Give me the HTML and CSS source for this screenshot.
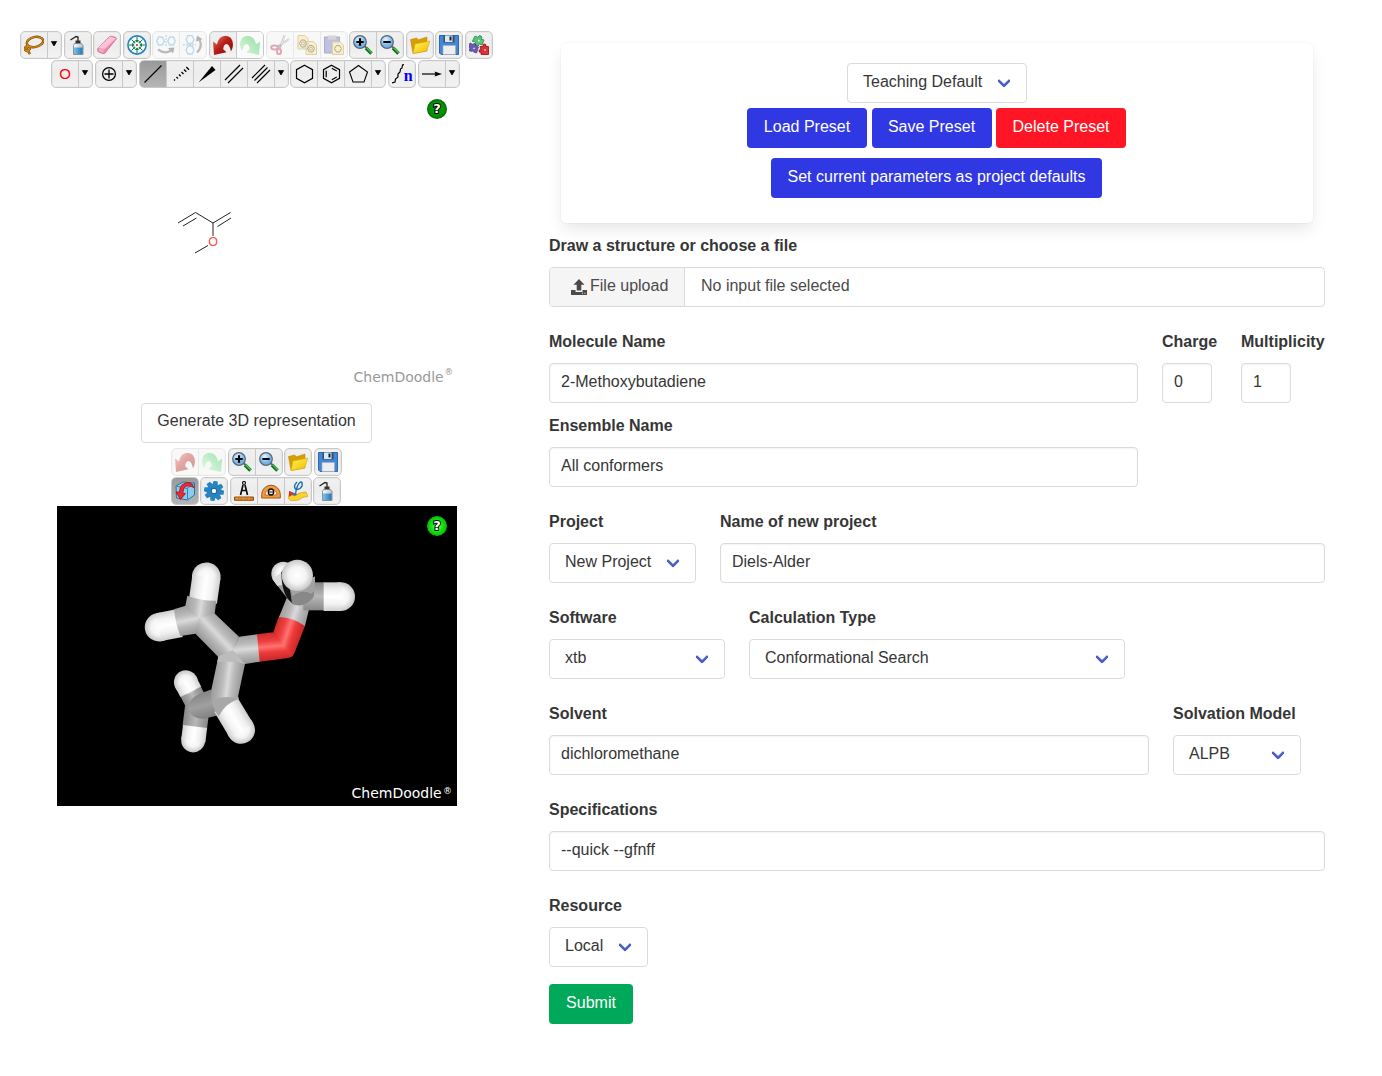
FILE: index.html
```html
<!DOCTYPE html>
<html lang="en">
<head>
<meta charset="utf-8">
<title>Launch calculation</title>
<link rel="stylesheet" href="styles.css">
</head>
<body>
<svg class="defs" width="0" height="0">
  <defs>
    <linearGradient id="red" x1="0" y1="0" x2="1" y2="1"><stop offset="0" stop-color="#ed8175"/><stop offset=".45" stop-color="#b92018"/><stop offset="1" stop-color="#7d0a08"/></linearGradient>
    <linearGradient id="green" x1="1" y1="0" x2="0" y2="1"><stop offset="0" stop-color="#21b94a"/><stop offset="1" stop-color="#b2f5ae"/></linearGradient>
    <linearGradient id="yellow" x1="0" y1="0" x2="1" y2="1"><stop offset="0" stop-color="#fff45a"/><stop offset="1" stop-color="#f2b900"/></linearGradient>
    <linearGradient id="metal"><stop offset="0" stop-color="#f8fbff"/><stop offset="1" stop-color="#b7c3cc"/></linearGradient>
    <linearGradient id="liquid"><stop offset="0" stop-color="#7bc3ee"/><stop offset="1" stop-color="#2477b5"/></linearGradient>
    <radialGradient id="lens" cx=".4" cy=".3"><stop offset="0" stop-color="#e6f6ff"/><stop offset="1" stop-color="#72b5e8"/></radialGradient>
    <radialGradient id="helpDark"><stop offset="0" stop-color="#079a07"/><stop offset=".75" stop-color="#059005"/><stop offset="1" stop-color="#035f03"/></radialGradient>
    <radialGradient id="helpLight"><stop offset="0" stop-color="#9bff9b"/><stop offset=".45" stop-color="#20ed20"/><stop offset="1" stop-color="#00bd00"/></radialGradient>
  </defs>
  <symbol id="i-lasso" viewBox="0 0 20 20"><g fill="none" stroke="#704000" stroke-width="2.4"><ellipse cx="11" cy="7" rx="8.300" ry="5" transform="rotate(-12 11 7)"/><path d="M4 10.500q-4 1.500-3 4.500 2 2 4 0t0-3.500q-4 1-1 4.500l2 3"/></g><g fill="none" stroke="#d58b18" stroke-width="1.200"><ellipse cx="11" cy="7" rx="8.300" ry="5" transform="rotate(-12 11 7)"/><path d="M4 10.500q-4 1.500-3 4.500 2 2 4 0t0-3.500q-4 1-1 4.500l2 3"/></g></symbol>
  <symbol id="i-bottle" viewBox="0 0 20 20"><path d="M2.500 5 8 1.500l2 .5v5" fill="none" stroke="#222" stroke-width="1.300"/><path d="M7.500 5.500h5v3h-5z" fill="#333"/><path d="M6.500 8.500h7l1.500 2v9H5.500v-9z" fill="url(#metal)" stroke="#777" stroke-width=".8"/><path d="M6 12.500h8.500V19H6z" fill="url(#liquid)"/></symbol>
  <symbol id="i-eraser" viewBox="0 0 20 20"><path d="m1 13 11-11q1-1 2.500-.7l4 1q1.500.7.500 2L8 18q-1 1-2.500.5L1.500 17Q0 16 1 13z" fill="#ef8aab" stroke="#b95478" stroke-width=".6"/><path d="m1 13 12-11.500 6 1.700L7.500 14.300z" fill="#ffc2d4"/><path d="m2 13.200 5 1.200-.7 3.500-4.500-1.400z" fill="#f7a7c0"/></symbol>
  <symbol id="i-center" viewBox="0 0 20 20"><circle cx="10" cy="10" r="9.100" fill="#f2fbff" stroke="#2783b8" stroke-width="1.600"/><path d="M10 2v5M10 18v-5M2 10h5M18 10h-5M4.500 4.500 8 8M15.500 4.500 12 8M4.500 15.500 8 12M15.500 15.500 12 12" stroke="#137c46" stroke-width="1"/><path d="m8 5 2 2.500L12 5zM8 15l2-2.500 2 2.500zM5 8l2.500 2L5 12zM15 8l-2.500 2 2.500 2zM5.500 8.200h2.700V5.500zM14.500 8.200h-2.700V5.500zM5.500 11.800h2.700v2.700zM14.500 11.800h-2.700v2.700z" fill="#128044"/><circle cx="10" cy="10" r="1.100" fill="#e24"/></symbol>
  <symbol id="i-fliph" viewBox="0 0 20 20"><path d="m.7 6 2-4h3.500l2 4-2 4H2.700zM11.800 6l2-4h3.500l2 4-2 4h-3.500z" fill="none" stroke="#4aa2d7" stroke-width="1.300"/><path d="M10 0v12" stroke="#777" stroke-dasharray="2 1"/><path d="M2 14.500q7 5 13 1" fill="none" stroke="#555" stroke-width="2.200"/><path d="m12 13 6.500-.5-1.500 6z" fill="#444"/></symbol>
  <symbol id="i-flipv" viewBox="0 0 20 20"><path d="m3 4.500 2-4h4l2 4-2 4H5zM3 15l2-4h4l2 4-2 4H5z" fill="none" stroke="#4aa2d7" stroke-width="1.300"/><path d="M0 9.800h13" stroke="#777" stroke-dasharray="2 1"/><path d="M14 17.500q6-6 2.500-12.500" fill="none" stroke="#555" stroke-width="2.200"/><path d="m13 6.500 1-6 5.500 3.800z" fill="#444"/></symbol>
  <symbol id="i-undo" viewBox="0 0 20 20"><path d="M0 6.500 1 20l12.500-2.700-3.300-3q.3-5 3.300-5.300 3 0 4.500 7.500Q20 13 20 9.500 19.500 1 12.500.7 5.500 1 4 9.500z" fill="url(#red)"/></symbol>
  <symbol id="i-redo" viewBox="0 0 20 20"><path d="m20 6.500-1 13.500-12.500-2.700 3.300-3Q9.500 9.300 6.500 9 3.500 9 2 16.500 0 13 0 9.500.5 1 7.500.7q7 .3 8.500 8.800z" fill="url(#green)"/></symbol>
  <symbol id="i-cut" viewBox="0 0 20 20"><path d="M19 4 7 12M14.500.5 9.500 14" stroke="#666" stroke-width="2"/><path d="m19 4-8 5M14.500 1l-3 8" stroke="#ccc"/><g fill="none" stroke="#b22b3c" stroke-width="2"><ellipse cx="4.500" cy="12.500" rx="3.300" ry="2"/><ellipse cx="9" cy="16.500" rx="2" ry="2.800"/></g></symbol>
  <symbol id="i-copy" viewBox="0 0 20 20"><path d="M1 .5h7l3 3v10.500H1zM9 6.500h7l3.500 3v10H9z" fill="#f3d56b" stroke="#a98a34"/><path d="m2.500 8.500 2-3.500h3l2 3.500-2 3.500h-3zM10.500 13.500l2-3h3l2 3-2 3.500h-3z" fill="none" stroke="#222"/><circle cx="6" cy="8.500" r="1.500" fill="none" stroke="#222" stroke-width=".6"/><circle cx="14" cy="13.700" r="1.500" fill="none" stroke="#222" stroke-width=".6"/></symbol>
  <symbol id="i-paste" viewBox="0 0 20 20"><path d="M.5 2h15v16H.5z" fill="#6464b8" stroke="#336"/><path d="M4 .5h8v4H4z" fill="#999"/><path d="M8.500 7h7.500l3.500 3v9.500h-11z" fill="#f3d56b" stroke="#a98a34"/><path d="m10.500 13.500 2-3h3l2 3-2 3.500h-3z" fill="none" stroke="#222"/></symbol>
  <symbol id="i-zoomin" viewBox="0 0 20 20"><path d="m13 13 5.500 5.500" stroke="#176b20" stroke-width="3.500"/><path d="m13.500 12.500 5.500 5.500" stroke="#44c552" stroke-width="1.500"/><path d="m11.500 11 2 2" stroke="#666" stroke-width="2"/><circle cx="7" cy="7" r="6.300" fill="url(#lens)" stroke="#596572" stroke-width="1.200"/><path d="M3.300 7h7.400M7 3.300v7.400" stroke="#000" stroke-width="2.200"/></symbol>
  <symbol id="i-zoomout" viewBox="0 0 20 20"><path d="m13 13 5.500 5.500" stroke="#176b20" stroke-width="3.500"/><path d="m13.500 12.500 5.500 5.500" stroke="#44c552" stroke-width="1.500"/><path d="m11.500 11 2 2" stroke="#666" stroke-width="2"/><circle cx="7" cy="7" r="6.300" fill="url(#lens)" stroke="#596572" stroke-width="1.200"/><path d="M3.300 7h7.400" stroke="#000" stroke-width="2.200"/></symbol>
  <symbol id="i-open" viewBox="0 0 20 20"><path d="m.5 4.500 6-1.500 2 1.700 8.500-2.700v14L3 18.500z" fill="#d89d00" stroke="#b88000" stroke-width=".5"/><path d="m5 9 15-3-3.500 10L3 18.500z" fill="url(#yellow)" stroke="#d9a600" stroke-width=".5"/></symbol>
  <symbol id="i-save" viewBox="0 0 20 20"><path d="M.5.500h19v19H2L.5 18z" fill="#4388d6" stroke="#2b68ae"/><path d="M4.500.500h11v7h-11z" fill="#344c70"/><path d="M6 .500h7.500v6.500H6z" fill="#dce9ef"/><path d="M10.500 1.500h2v4h-2z" fill="#123"/><path d="M4 10.500h12.500v9H4z" fill="#eee" stroke="#aab" stroke-width=".7"/></symbol>
  <symbol id="i-parts" viewBox="0 0 20 20"><path d="m6 1 3 1.500q1-3 3-1.500t0 3l3 1-2 5-2.500-1q-2 0-1 2l-4-1 1-3q-2-2-2.500 0l-.5-1z" fill="#5bc576" stroke="#15794b" stroke-width=".7"/><path d="m1 8 3 1.500q1-2 2.500-.5t0 2l3 1-2 6-3-1q-.5-2-2-.5L0 15.500l1-2.500q-2-1-1-2z" fill="#6c5bb3" stroke="#483786" stroke-width=".7"/><path d="M11 11.500h3q-.5-3 1.500-2.500 2 0 1.500 2.500h2.500v8h-7.500V17q-2 1-2-1t2-1z" fill="#dc3035" stroke="#8e1218" stroke-width=".8"/><path d="m9 5.300 1.500.7M4.500 13l1 .7M15.300 15h1.400" stroke="#fff" stroke-width="1.400"/></symbol>
  <symbol id="i-charge" viewBox="0 0 20 20"><circle cx="10" cy="10" r="6.400" fill="none" stroke="#000" stroke-width="1.300"/><path d="M5.500 10h9M10 5.500v9" stroke="#000" stroke-width="1.300"/></symbol>
  <symbol id="i-single" viewBox="0 0 20 20"><path d="M1.500 18.500 18.500 1.500" stroke="#000" stroke-width="1.100"/></symbol>
  <symbol id="i-dashed" viewBox="0 0 20 20"><path d="m4 15.500 1 1M6.500 13l1.500 1.500M9 10.500l1.700 1.700M11.500 8l2 2M14 5.500l2.300 2.300M16.300 3l2.700 2.700" stroke="#000" stroke-width="1.300"/></symbol>
  <symbol id="i-wedge" viewBox="0 0 20 20"><path d="M1.500 18.500 15 2l3.500 4z"/></symbol>
  <symbol id="i-double" viewBox="0 0 20 20"><path d="M1 16 16 1M4 19 19 4" stroke="#000" stroke-width="1.200"/></symbol>
  <symbol id="i-triple" viewBox="0 0 20 20"><path d="M1 14 14 1M3.500 16.500 16.500 3.500M6 19 19 6" stroke="#000" stroke-width="1.200"/></symbol>
  <symbol id="i-hexagon" viewBox="0 0 20 20"><path d="m10.500 1.200 8 4.400v8.800l-8 4.400-8-4.400V5.600z" fill="none" stroke="#000" stroke-width="1.200"/></symbol>
  <symbol id="i-benzene" viewBox="0 0 20 20"><path d="m10.500 1.200 8 4.400v8.800l-8 4.400-8-4.400V5.600zM5.200 6.700v6.600M10.800 4.300l5 2.700M10.800 15.700l5-2.700" fill="none" stroke="#000" stroke-width="1.200"/></symbol>
  <symbol id="i-pentagon" viewBox="0 0 20 20"><path d="m10.500 1.500 9 6.500-3.500 10h-11L1.500 8z" fill="none" stroke="#000" stroke-width="1.100"/></symbol>
  <symbol id="i-arrow" viewBox="0 0 20 20"><path d="M0 10h16" stroke="#333" stroke-width="1.400"/><path d="m12.500 7.500 7.500 2.500-7.500 2.500 1-2.500z"/></symbol>
  <symbol id="i-rotate" viewBox="0 0 20 20"><path d="m1 5 7-4 11.500 1v12l-7 5L1.500 17z" fill="#8dcbed" stroke="#2378a5"/><path d="m1 5 11 2.500 7-5M12.500 7.500v11" fill="none" stroke="#3187b4"/><path d="M19 6.500Q16-1.500 7.500 3.500 4.500 6 4.500 11H1l4.500 7.500 5-6H7.800Q8 1 19 6.500z" fill="#f12a32" stroke="#a30e16" stroke-width=".8"/></symbol>
  <symbol id="i-gear" viewBox="0 0 20 20"><g fill="#2684c3"><circle cx="10" cy="10" r="7"/><path d="M8 0h4l1 5H7zM8 20h4l1-5H7zM0 8v4l5 1V7zM20 8v4l-5 1V7z" transform="rotate(10 10 10)"/><path d="M8 0h4l1 5H7zM8 20h4l1-5H7zM0 8v4l5 1V7zM20 8v4l-5 1V7z" transform="rotate(55 10 10)"/></g><circle cx="10" cy="10" r="2.800" fill="#f3f8fc" stroke="#155a8b"/></symbol>
  <symbol id="i-distance" viewBox="0 0 20 20"><circle cx="10" cy="2" r="1.500" fill="none" stroke="#111" stroke-width="1.200"/><path d="M9 4 6.500 14M11 4l2.500 10M7.500 9.500h5" fill="none" stroke="#111" stroke-width="1.700"/><path d="M.5 16h19v3.300H.5z" fill="#d98029" stroke="#96500f"/><path d="M3 16.500v2M6 16.500v1M9 16.500v2M12 16.500v1M15 16.500v2" stroke="#f4bd73" stroke-width=".7"/></symbol>
  <symbol id="i-angle" viewBox="0 0 20 20"><path d="M.7 17v-3.500a9.300 9.300 0 0 1 18.600 0V17z" fill="#ed9c45" stroke="#a8560b"/><path d="M4 14a6 6 0 0 1 12 0z" fill="#fff3df" stroke="#a8560b" stroke-width=".7"/><ellipse cx="10" cy="11" rx="2.700" ry="3" fill="none" stroke="#111" stroke-width="1.300"/><path d="M7.500 11h5" stroke="#111"/></symbol>
  <symbol id="i-torsion" viewBox="0 0 20 20"><path d="m1 10 8 3 9-2v4l-9 4-8-2z" fill="#2c78c5"/><path d="m1 13 6 2q4-4 11-4l2 4.500q-6 0-9 3.500l-8 1-3-3z" fill="#ffd02b" stroke="#c68c00" stroke-width=".5"/><path d="m1 10 5 2.500-5 3.500z" fill="#dd3028"/><path d="M9 1Q5 5 7.500 8q4 1.500 6.500-3 .7-4.500-1.500-4-3.500 2-5 12" fill="none" stroke="#176fae" stroke-width="1.400"/></symbol>
  <symbol id="i-down" viewBox="0 0 8 8"><path d="M1.300 1.500h5.400L4 6z" stroke="#000" stroke-width=".7" stroke-linejoin="round"/></symbol>
</svg>

<main class="page">
  <section class="sketcher">
    <div class="toolbar wide">
      <div class="group"><span class="tool"><svg><use href="#i-lasso"/></svg></span><span class="drop"><svg><use href="#i-down"/></svg></span></div>
      <div class="group"><span class="tool"><svg><use href="#i-bottle"/></svg></span></div>
      <div class="group"><span class="tool"><svg><use href="#i-eraser"/></svg></span></div>
      <div class="group"><span class="tool"><svg><use href="#i-center"/></svg></span></div>
      <div class="group off"><span class="tool"><svg><use href="#i-fliph"/></svg></span><span class="tool"><svg><use href="#i-flipv"/></svg></span></div>
      <div class="group"><span class="tool"><svg><use href="#i-undo"/></svg></span><span class="tool off-tool"><svg><use href="#i-redo"/></svg></span></div>
      <div class="group off"><span class="tool"><svg><use href="#i-cut"/></svg></span><span class="tool"><svg><use href="#i-copy"/></svg></span><span class="tool"><svg><use href="#i-paste"/></svg></span></div>
      <div class="group"><span class="tool"><svg><use href="#i-zoomin"/></svg></span><span class="tool"><svg><use href="#i-zoomout"/></svg></span></div>
      <div class="group"><span class="tool"><svg><use href="#i-open"/></svg></span></div>
      <div class="group"><span class="tool"><svg><use href="#i-save"/></svg></span></div>
      <div class="group"><span class="tool"><svg><use href="#i-parts"/></svg></span></div>
    </div>
    <div class="toolbar bonds">
      <div class="group"><span class="tool element">O</span><span class="drop"><svg><use href="#i-down"/></svg></span></div>
      <div class="group"><span class="tool"><svg><use href="#i-charge"/></svg></span><span class="drop"><svg><use href="#i-down"/></svg></span></div>
      <div class="group"><span class="tool active"><svg><use href="#i-single"/></svg></span><span class="tool"><svg><use href="#i-dashed"/></svg></span><span class="tool"><svg><use href="#i-wedge"/></svg></span><span class="tool"><svg><use href="#i-double"/></svg></span><span class="tool"><svg><use href="#i-triple"/></svg></span><span class="drop"><svg><use href="#i-down"/></svg></span></div>
      <div class="group"><span class="tool"><svg><use href="#i-hexagon"/></svg></span><span class="tool"><svg><use href="#i-benzene"/></svg></span><span class="tool"><svg><use href="#i-pentagon"/></svg></span><span class="drop"><svg><use href="#i-down"/></svg></span></div>
      <div class="group"><span class="tool chain"><svg viewBox="0 0 12 20"><path d="m0 19 3-1 .5-3 2.500-2 0-3 2-2 .500-3L10 4l.500-3L12 .500" fill="none" stroke="#000" stroke-width="1.200"/></svg><b>n</b></span></div>
      <div class="group"><span class="tool"><svg><use href="#i-arrow"/></svg></span><span class="drop"><svg><use href="#i-down"/></svg></span></div>
    </div>
    <svg class="canvas flat" viewBox="0 0 400 300">
      <path d="M121 135 138.500 124.500 156 135 173.500 124.500M126 138l13.500-8M160.500 138.500l13.500-8.500M156 135V148M138 165l13-7.500" fill="none" stroke="#222"/>
      <text x="156" y="158" class="oxygen">O</text>
      <circle cx="380" cy="21" r="10" fill="url(#helpDark)"/>
      <text x="380" y="25" class="help">?</text>
      <text x="296.500" y="294" class="brand">ChemDoodle</text><text x="387.300" y="287" class="brand reg">®</text>
    </svg>
    <button class="button outline">Generate 3D representation</button>
    <div class="toolbar view">
      <div class="group off"><span class="tool"><svg><use href="#i-undo"/></svg></span><span class="tool"><svg><use href="#i-redo"/></svg></span></div>
      <div class="group"><span class="tool"><svg><use href="#i-zoomin"/></svg></span><span class="tool"><svg><use href="#i-zoomout"/></svg></span></div>
      <div class="group"><span class="tool"><svg><use href="#i-open"/></svg></span></div>
      <div class="group"><span class="tool"><svg><use href="#i-save"/></svg></span></div>
    </div>
    <div class="toolbar view measure">
      <div class="group"><span class="tool active"><svg><use href="#i-rotate"/></svg></span></div>
      <div class="group"><span class="tool"><svg><use href="#i-gear"/></svg></span></div>
      <div class="group"><span class="tool"><svg><use href="#i-distance"/></svg></span><span class="tool"><svg><use href="#i-angle"/></svg></span><span class="tool"><svg><use href="#i-torsion"/></svg></span></div>
      <div class="group"><span class="tool"><svg><use href="#i-bottle"/></svg></span></div>
    </div>
    <svg class="canvas solid" viewBox="0 0 400 300">
      <defs>
        <linearGradient id="c" x2="0" y2="1"><stop offset="0" stop-color="#a0a0a0"/><stop offset=".3" stop-color="#bababa"/><stop offset=".5" stop-color="#dadada"/><stop offset=".7" stop-color="#bababa"/><stop offset="1" stop-color="#9a9a9a"/></linearGradient>
        <linearGradient id="cd" x2="0" y2="1"><stop offset="0" stop-color="#888"/><stop offset=".5" stop-color="#b8b8b8"/><stop offset="1" stop-color="#888"/></linearGradient>
        <linearGradient id="cc" href="#c" gradientUnits="userSpaceOnUse" x1="290" y1="237" x2="228" y2="295"/>
        <linearGradient id="cu" href="#c" gradientUnits="userSpaceOnUse" x1="171" y1="168" x2="257" y2="180"/>
        <linearGradient id="cl" href="#c" gradientUnits="userSpaceOnUse" x1="150" y1="188" x2="167" y2="270"/>
        <linearGradient id="co" href="#c" gradientUnits="userSpaceOnUse" x1="350" y1="271" x2="358" y2="353"/>
        <linearGradient id="c3" href="#c" gradientUnits="userSpaceOnUse" x1="255" y1="392" x2="335" y2="402"/>
        <linearGradient id="cm" href="#c" gradientUnits="userSpaceOnUse" x1="457" y1="190" x2="534" y2="215"/>
        <linearGradient id="c4" gradientUnits="userSpaceOnUse" x1="205" y1="445" x2="225" y2="522"><stop offset="0" stop-color="#858585"/><stop offset=".5" stop-color="#a0a0a0"/><stop offset="1" stop-color="#808080"/></linearGradient>
        <linearGradient id="o"><stop offset="0" stop-color="#cf2a2a"/><stop offset=".3" stop-color="#f04040"/><stop offset=".5" stop-color="#ff7272"/><stop offset=".7" stop-color="#ee3a3a"/><stop offset="1" stop-color="#c82828"/></linearGradient>
        <linearGradient id="oh" href="#o" gradientUnits="userSpaceOnUse" x1="405" y1="265" x2="413" y2="347"/>
        <linearGradient id="ov" href="#o" gradientUnits="userSpaceOnUse" x1="436" y1="240" x2="515" y2="267"/>
        <linearGradient id="h" x2="0" y2="1"><stop offset="0" stop-color="#cfcfcf"/><stop offset=".25" stop-color="#f0f0f0"/><stop offset=".5" stop-color="#fff"/><stop offset=".75" stop-color="#f3f3f3"/><stop offset="1" stop-color="#cfcfcf"/></linearGradient>
        <radialGradient id="hs"><stop offset="0" stop-color="#fff"/><stop offset=".55" stop-color="#f4f4f4"/><stop offset="1" stop-color="#c6c6c6"/></radialGradient>
      </defs>
      <g transform="translate(73 39) scale(.3333)">
        <g transform="translate(205 485) rotate(-117)"><rect y="-34" width="52" height="68" fill="url(#cd)"/><circle cx="82" r="36" fill="url(#hs)"/><rect x="50" y="-35" width="33" height="70" fill="url(#h)"/></g>
        <g transform="translate(202 485) rotate(97)"><rect y="-37" width="62" height="74" fill="url(#cd)"/><circle cx="102" r="36" fill="url(#hs)"/><rect x="60" y="-37" width="43" height="73" fill="url(#h)"/></g>
        <path d="M255 430 208 446Q174 464 172 490 186 524 222 521L268 510 270 465z" fill="url(#c4)"/>
        <g transform="translate(281 468) rotate(59)"><circle cx="101" r="42" fill="url(#hs)"/><rect x="14" y="-41" width="88" height="82" fill="url(#h)"/></g>
        <path d="M243 455Q284 440 323 450L327 461Q285 475 266 514 247 490 243 455z" fill="#a8a8a8"/>
        <path d="M308 318 345 357 323 460Q284 450 243 465L245 430 265 335z" fill="url(#c3)"/>
        <g transform="translate(209 223) rotate(169)"><circle cx="124" r="43" fill="url(#hs)"/><rect x="60" y="-42" width="65" height="85" fill="url(#h)"/></g>
        <g transform="translate(212 215) rotate(-82)"><circle cx="121" r="43" fill="url(#hs)"/><rect x="45" y="-42" width="77" height="85" fill="url(#h)"/></g>
        <path d="M210 221 167 182 132 193Q136 235 151 273L197 266z" fill="url(#cl)"/>
        <path d="M206 222 166 183 172 152Q215 168 259 167L254 207z" fill="url(#cu)"/>
        <path d="M206 219 253 205 327 275 308 320 265 336 195 265z" fill="url(#cc)"/>
        <path d="M306 320 327 275 384 268 391 350 345 357 306 350z" fill="url(#co)"/>
        <path d="M265 334 308 316 345 357Q300 345 262 352z" fill="#bcbcbc"/>
        <path d="M381 268 430 262 466 300 490 332Q480 339 470 340L389 350z" fill="url(#oh)"/>
        <path d="M430 262 447 214Q487 216 526 241L498 312Q494 328 484 335L462 304z" fill="url(#ov)"/>
        <path d="M447 216 470 160H545L525 243Q490 218 447 216z" fill="url(#cm)"/>
        <rect x="520" y="112" width="64" height="84" fill="url(#cd)"/><circle cx="632" cy="155" r="43" fill="url(#hs)"/><rect x="581" y="112" width="52" height="86" fill="url(#h)"/>
        <path d="M430 106 475 164 490 150 472 90z" fill="#a0a0a0"/>
        <circle cx="460" cy="86" r="36" fill="url(#hs)"/><path d="m427 101 15 22 31-10-4-40z" fill="#dcdcdc"/>
        <path d="M454 82Q455 142 476 164L488 176 480 110 463 70z" fill="#111"/>
        <path d="M479 126 486 177Q523 192 551 156L555 102 505 120z" fill="#888"/><path d="m479 126 9 28q27-22 56-8l11-10V94l-49 28z" fill="#a2a2a2"/>
        <circle cx="502" cy="91" r="47" fill="url(#hs)"/>
      </g>
      <circle cx="380" cy="20" r="10" fill="url(#helpLight)"/>
      <text x="380" y="24" class="help">?</text>
      <text x="294.500" y="292" class="brand light">ChemDoodle</text><text x="386" y="288" class="brand reg light">®</text>
    </svg>
  </section>

  <form class="form">
    <div class="card">
      <span class="select w180"><select><option>Teaching Default</option></select></span>
      <div class="presets"><button type="button" class="button blue w120">Load Preset</button><button type="button" class="button blue w120">Save Preset</button><button type="button" class="button danger w130">Delete Preset</button></div>
      <button type="button" class="button blue defaults">Set current parameters as project defaults</button>
    </div>
    <div class="field"><span class="label">Draw a structure or choose a file</span>
      <div class="file"><span class="file-cta"><svg viewBox="0 0 16 16" width="16" height="16"><path d="m8 0 5.500 5.700H10.300V11.500H5.700V5.700H2.500zM0 11h4.500v2h7v-2H16v5H0z" fill="#4a4a4a"/><path d="M11 14.300h1M13.500 14.300h1" stroke="#eee"/></svg>File upload</span><span class="file-name">No input file selected</span></div>
    </div>
    <div class="row tight">
      <label class="field w589"><span class="label">Molecule Name</span><input value="2-Methoxybutadiene"></label>
      <label class="field charge"><span class="label">Charge</span><input value="0"></label>
      <label class="field mult"><span class="label">Multiplicity</span><input value="1"></label>
    </div>
    <label class="field w589"><span class="label">Ensemble Name</span><input value="All conformers"></label>
    <div class="row">
      <div class="field"><span class="label">Project</span><span class="select w147"><select><option>New Project</option></select></span></div>
      <label class="field grow"><span class="label">Name of new project</span><input value="Diels-Alder"></label>
    </div>
    <div class="row">
      <div class="field"><span class="label">Software</span><span class="select w176"><select><option>xtb</option></select></span></div>
      <div class="field"><span class="label">Calculation Type</span><span class="select w376"><select><option>Conformational Search</option></select></span></div>
    </div>
    <div class="row">
      <label class="field w600"><span class="label">Solvent</span><input value="dichloromethane"></label>
      <div class="field"><span class="label">Solvation Model</span><span class="select w128"><select><option>ALPB</option></select></span></div>
    </div>
    <label class="field"><span class="label">Specifications</span><input value="--quick --gfnff"></label>
    <div class="field last"><span class="label">Resource</span><span class="select w99"><select><option>Local</option></select></span></div>
    <button type="button" class="button submit">Submit</button>
  </form>
</main>
</body>
</html>
```
FILE: styles.css
```css
*, *::after { box-sizing: border-box; }
body { margin: 0; background: #fff; color: #363636; font: 16px/24px "Liberation Sans", Arial, sans-serif; }
.defs { position: absolute; }
.page { display: flex; align-items: flex-start; min-height: 1076px; }
.sketcher { width: 473px; margin: 31px 56px 0 20px; display: flex; flex-direction: column; align-items: center; flex: none; }
.toolbar { display: flex; justify-content: space-between; height: 28px; margin-bottom: 1px; }
.wide { width: 473px; }
.bonds { width: 409px; margin-bottom: 0; margin-right: 2px; }
.view { width: 171px; }
.measure { width: 170px; margin-right: 1px; }
.group { display: flex; border: 1px solid #c8c8c8; border-radius: 5px; background: linear-gradient(#f1f1f1, #ececec 50%, #f3f3f3); overflow: hidden; box-shadow: inset 0 0 0 1px rgba(0,0,0,.03); }
.tool, .drop { display: flex; align-items: center; justify-content: center; width: 26px; }
.drop { width: 13px; padding: 0 1px 3px 0; }
.tool + .tool, .tool + .drop { border-left: 1px solid #c8c8c8; box-sizing: content-box; }
.tool + .drop { width: 12px; }
.tool svg { width: 20px; height: 20px; }
.drop svg { width: 8px; height: 8px; }
.off { opacity: .4; }
.off-tool { background: #fafafa; }
.off-tool svg { opacity: .45; }
.active { background: linear-gradient(#999, #b5b5b5); }
.element { color: #f00; font-size: 15px; }
.chain svg { width: 12px; flex: none; }
.chain b { font: bold 16px/20px "Liberation Serif", serif; color: #00f; padding-top: 4px; }
.canvas { width: 400px; height: 300px; display: block; position: relative; left: .5px; }
.solid { background: #000; }
.flat { margin-bottom: 15px; }
.oxygen { font: 12.5px "Liberation Sans", sans-serif; fill: #ff4545; text-anchor: middle; }
.help { font: bold 13px "DejaVu Sans", sans-serif; fill: #fff; stroke: #000; stroke-width: 2px; paint-order: stroke; text-anchor: middle; }
.brand { font: 14px "DejaVu Sans", sans-serif; fill: #999; }
.reg { font-size: 9px; }
.light { fill: #fff; }
.button { height: 40px; padding: 0 0 2px; border: 1px solid transparent; border-radius: 4px; font: inherit; color: #fff; white-space: nowrap; }
.outline { width: 231px; padding-bottom: 4px; margin-bottom: 5px; color: #363636; background: #fff; border-color: #dbdbdb; }
.blue { background: #3038e4; }
.danger { background: #ff1524; }
.submit { width: 84px; background: #00a859; align-self: flex-start; }
.defaults { width: 331px; margin-right: 1px; }
.form { width: 776px; display: flex; flex-direction: column; align-items: stretch; }
.card { margin: 43px 12px 12px; height: 180px; padding-top: 20px; display: flex; flex-direction: column; align-items: center; border-radius: 6px; box-shadow: 0 8px 16px -2px rgba(10,10,10,.1), 0 0 0 1px rgba(10,10,10,.02); }
.presets { display: flex; gap: 4.5px; margin: 5px 1px 10px 0; }
.field { display: flex; flex-direction: column; margin-bottom: 24px; }
.label { font-weight: bold; line-height: 24px; height: 24px; margin-bottom: 8px; position: relative; top: -1px; white-space: nowrap; }
.row { display: flex; gap: 24px; }
.tight .field { margin-bottom: 12px; }
.grow { flex: 1; }
input, select { height: 40px; width: 100%; border: 1px solid #dbdbdb; border-radius: 4px; font: inherit; color: #363636; background: #fff; margin: 0; }
input { padding: 0 11px 3px; box-shadow: inset 0 1px 2px rgba(10,10,10,.05); }
select { appearance: none; padding: 0 30px 3px 15px; display: block; }
.select { position: relative; display: block; height: 40px; }
.select::after { content: ""; position: absolute; right: 18px; top: 13px; width: 10px; height: 10px; border: 3px solid #485fc7; border-top: 0; border-right: 0; border-radius: 2px; transform: rotate(-45deg); }
.charge { width: 55px; }
.mult { width: 84px; }
.charge input, .mult input { width: 50px; }
.last { margin-bottom: 17px; }
.file { display: flex; height: 40px; border: 1px solid #dbdbdb; border-radius: 4px; overflow: hidden; color: #4a4a4a; }
.file-cta { width: 135px; background: #f5f5f5; border-right: 1px solid #dbdbdb; padding: 6px 0 0 21px; display: flex; gap: 3px; }
.file-cta svg { margin-top: 5px; }
.file-name { padding: 6px 16px; }
.w99 { width: 99px; } .w120 { width: 120px; } .w128 { width: 128px; } .w130 { width: 130px; } .w147 { width: 147px; }
.w176 { width: 176px; } .w180 { width: 180px; } .w376 { width: 376px; } .w589 { width: 589px; } .w600 { width: 600px; }
```
